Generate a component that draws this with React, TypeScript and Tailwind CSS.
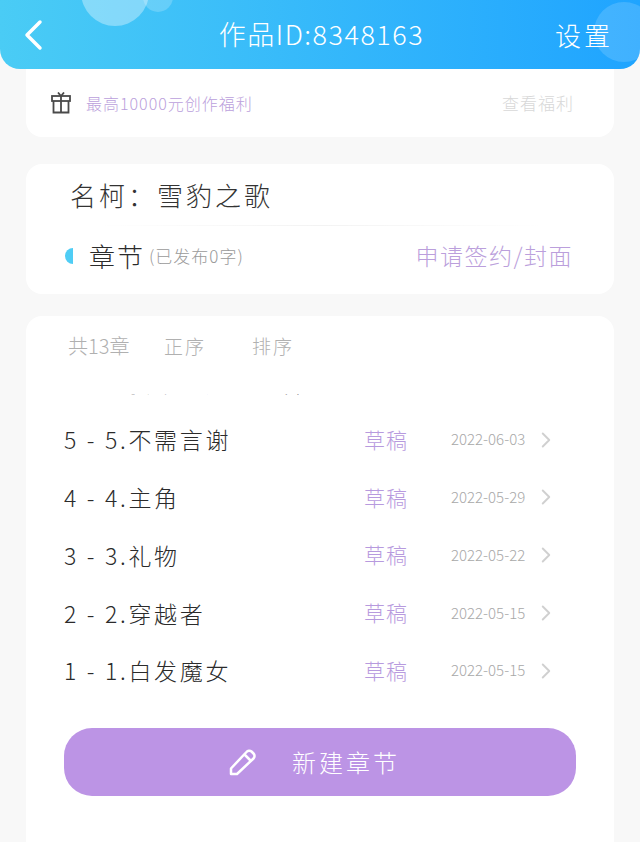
import { ChevronRight } from "lucide-react";

const handFont = "font-['Noto_Sans_CJK_SC','Noto_Sans',sans-serif]";

const chapters = [
  { label: "6 - 6.我来到这个世界了", date: "2022-06-10" },
  { label: "5 - 5.不需言谢", date: "2022-06-03" },
  { label: "4 - 4.主角", date: "2022-05-29" },
  { label: "3 - 3.礼物", date: "2022-05-22" },
  { label: "2 - 2.穿越者", date: "2022-05-15" },
  { label: "1 - 1.白发魔女", date: "2022-05-15" }
];

function ChapterRow({ label, date }: { label: string; date: string }) {
  return (
    <div className="flex h-[57.75px] shrink-0 items-center">
      <span className="w-[300px] text-[23px] font-light tracking-[2.7px] whitespace-nowrap text-[#2b2b2b]">{label}</span>
      <span className="w-[87px] text-[21px] font-light tracking-[1px] text-[#b79ade]">草稿</span>
      <span className="w-[88px] text-[15px] font-light text-[#a8a8a8]">{date}</span>
      <ChevronRight className="h-[26px] w-[26px] -translate-x-[6px] text-[#d0d0d0]" strokeWidth={1.75} />
    </div>
  );
}

export default function App() {
  return (
    <div className={`flex h-[842px] w-[640px] flex-col overflow-hidden bg-[#f8f8f8] ${handFont}`}>
      <header className="relative z-10 flex h-[69px] shrink-0 items-center justify-between overflow-hidden rounded-b-[20px] bg-gradient-to-r from-[#4accf5] to-[#1fa4ff] pr-[27px] pl-[17px] text-white">
        <div className="absolute -top-[42px] left-[81px] h-[68px] w-[68px] rounded-full bg-white/35" />
        <div className="absolute -top-[18px] left-[143px] h-[30px] w-[30px] rounded-full bg-white/20" />
        <div className="absolute top-[2px] -right-[14px] h-[60px] w-[60px] rounded-full bg-white/15" />
        <svg className="relative h-9 w-9" viewBox="0 0 36 36" fill="none" stroke="currentColor" strokeWidth="3.5" strokeLinecap="round" strokeLinejoin="round">
          <path d="M23 5 L10 18 L23 31" />
        </svg>
        <h1 className="relative ml-[35px] text-[27px] font-light tracking-[1.5px]">作品ID:8348163</h1>
        <span className="relative text-[26px] font-light tracking-[3px]">设置</span>
      </header>

      <div className="mx-[26px] flex h-[68px] shrink-0 items-center rounded-b-[16px] bg-white pr-[40px] pl-[25px]">
        <svg className="h-[22px] w-5 text-[#4a4a4a]" viewBox="0 0 20 22" fill="none" stroke="currentColor" strokeWidth="1.8">
          <path d="M7 0.5 L10 4 L13 0.5" />
          <rect x="1" y="4" width="18" height="5" />
          <path d="M2.5 9 V20.5 H17.5 V9 M10 4 V20.5" />
        </svg>
        <span className="ml-[15px] text-[16px] font-light tracking-[1px] whitespace-nowrap text-[#bb9fdc]">最高10000元创作福利</span>
        <span className="ml-auto text-[17px] font-light tracking-[1px] text-[#d8d8d8]">查看福利</span>
      </div>

      <section className="mx-[26px] mt-[27px] h-[130px] shrink-0 rounded-[16px] bg-white">
        <div className="mx-[44px] h-[61px] pt-[12px] text-[26px] leading-[38px] font-light tracking-[3px] whitespace-nowrap text-[#333333]">
          名柯：雪豹之歌
        </div>
        <div className="mx-[70px] h-px bg-gradient-to-r from-white via-[#f3f3f3] to-white" />
        <div className="mt-[10px] flex items-center pr-[41px]">
          <span className="ml-[39px] h-[16px] w-[8px] rounded-l-full bg-[#4fcdf5]" />
          <span className="ml-[16px] text-[26px] font-light tracking-[2px] text-[#2b2b2b]">章节</span>
          <span className="ml-[4px] text-[17px] font-light tracking-[1px] whitespace-nowrap text-[#9a9a9a]">(已发布0字)</span>
          <span className="ml-auto text-[23px] font-light tracking-[1.5px] whitespace-nowrap text-[#bb9fdc]">申请签约/封面</span>
        </div>
      </section>

      <section className="mx-[26px] mt-[22px] flex min-h-0 flex-1 flex-col rounded-t-[16px] bg-white px-[38px]">
        <div className="flex h-[78px] shrink-0 items-center pb-[18px] text-[19px] font-light text-[#b0b0b0]">
          <span className="ml-[4px] w-[96px] text-[20px] whitespace-nowrap">共13章</span>
          <span className="w-[88px] tracking-[2px]">正序</span>
          <span className="tracking-[2px]">排序</span>
        </div>
        <div className="h-[306px] shrink-0 overflow-hidden">
          <div className="-mt-[41px] flex flex-col">
            {chapters.map((chapter) => (
              <ChapterRow key={chapter.label} label={chapter.label} date={chapter.date} />
            ))}
          </div>
        </div>
        <button
          type="button"
          className="mt-[28px] flex h-[68px] w-[512px] shrink-0 items-center rounded-[28px] bg-[#bc94e5] pl-[165px] text-white"
        >
          <svg className="h-7 w-7" viewBox="0 0 28 28" fill="none" stroke="currentColor" strokeWidth="2.5" strokeLinejoin="round">
            <path d="M2 26 V20.5 L17.5 4 A3.5 3.5 0 0 1 22.5 3.5 L24.5 5.5 A3.5 3.5 0 0 1 24.5 10.5 L8 26 Z" />
            <path d="M15.5 6.5 L21.5 12.5" />
          </svg>
          <span className="ml-[35px] text-[24px] font-light tracking-[3px]">新建章节</span>
        </button>
      </section>
    </div>
  );
}
